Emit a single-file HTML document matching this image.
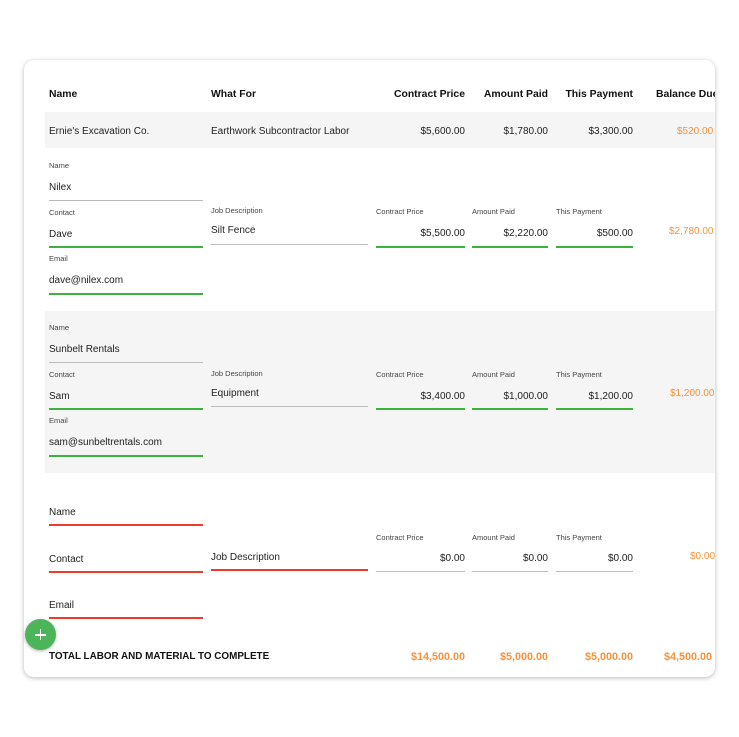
<!DOCTYPE html>
<html><head><meta charset="utf-8"><style>
*{margin:0;padding:0;box-sizing:border-box}
body{width:739px;height:737px;background:#fff;font-family:"Liberation Sans",sans-serif;position:relative;overflow:hidden;color:#222}
.card{position:absolute;left:24px;top:60px;width:691px;height:617px;border-radius:10px;background:#fff;box-shadow:0 1px 5px rgba(0,0,0,.28);overflow:hidden}
.a{position:absolute;white-space:nowrap;font-size:10px;line-height:12px;margin-top:2px}
.h{font-weight:bold;font-size:10.4px;color:#111}
.r{text-align:right}
.lb{font-size:7.5px;color:#444;line-height:10px;margin-top:1px}
.o{color:#f7923a}
.ob{color:#f7923a;font-weight:bold;font-size:10.8px}
.ln{position:absolute;height:1px;background:#bbb}
.g{height:2px;background:#3cb33c}
.rd{height:2px;background:#ee3b2a}
.bg{position:absolute;background:#f5f5f5}
</style></head><body>
<div class="card">
<div class="bg" style="left:21px;top:52px;width:680px;height:36px"></div>
<div class="bg" style="left:21px;top:251px;width:680px;height:162px"></div>
</div>
<div style="position:absolute;left:24px;top:60px;width:691px;height:617px;overflow:hidden;border-radius:10px">
<div style="position:absolute;left:-24px;top:-60px;width:760px;height:737px">
<div class="a h" style="left:49px;top:87px">Name</div>
<div class="a h" style="left:211px;top:87px">What For</div>
<div class="a h r" style="left:345px;width:120px;top:87px">Contract Price</div>
<div class="a h r" style="left:428px;width:120px;top:87px">Amount Paid</div>
<div class="a h r" style="left:513px;width:120px;top:87px">This Payment</div>
<div class="a h" style="left:656px;top:87px">Balance Due</div>
<div class="a" style="left:49px;top:124px">Ernie's Excavation Co.</div>
<div class="a" style="left:211px;top:124px">Earthwork Subcontractor Labor</div>
<div class="a r" style="left:365px;width:100px;top:124px">$5,600.00</div>
<div class="a r" style="left:448px;width:100px;top:124px">$1,780.00</div>
<div class="a r" style="left:533px;width:100px;top:124px">$3,300.00</div>
<div class="a o" style="left:677px;top:124px">$520.00</div>
<div class="a lb" style="left:49px;top:160px">Name</div>
<div class="a" style="left:49px;top:180px">Nilex</div>
<div class="ln" style="left:49px;top:200px;width:154px"></div>
<div class="a lb" style="left:49px;top:207px">Contact</div>
<div class="a" style="left:49px;top:227px">Dave</div>
<div class="ln g" style="left:49px;top:246px;width:154px"></div>
<div class="a lb" style="left:49px;top:253px">Email</div>
<div class="a" style="left:49px;top:273px">dave@nilex.com</div>
<div class="ln g" style="left:49px;top:293px;width:154px"></div>
<div class="a lb" style="left:211px;top:205px">Job Description</div>
<div class="a" style="left:211px;top:223px">Silt Fence</div>
<div class="ln" style="left:211px;top:244px;width:157px"></div>
<div class="a lb" style="left:376px;top:206px">Contract Price</div>
<div class="a lb" style="left:472px;top:206px">Amount Paid</div>
<div class="a lb" style="left:556px;top:206px">This Payment</div>
<div class="a r" style="left:365px;width:100px;top:226px">$5,500.00</div>
<div class="a r" style="left:448px;width:100px;top:226px">$2,220.00</div>
<div class="a r" style="left:533px;width:100px;top:226px">$500.00</div>
<div class="ln g" style="left:376px;top:246px;width:89px"></div>
<div class="ln g" style="left:472px;top:246px;width:76px"></div>
<div class="ln g" style="left:556px;top:246px;width:77px"></div>
<div class="a o" style="left:669px;top:224px">$2,780.00</div>
<div class="a lb" style="left:49px;top:322px">Name</div>
<div class="a" style="left:49px;top:342px">Sunbelt Rentals</div>
<div class="ln" style="left:49px;top:362px;width:154px"></div>
<div class="a lb" style="left:49px;top:369px">Contact</div>
<div class="a" style="left:49px;top:389px">Sam</div>
<div class="ln g" style="left:49px;top:408px;width:154px"></div>
<div class="a lb" style="left:49px;top:415px">Email</div>
<div class="a" style="left:49px;top:435px">sam@sunbeltrentals.com</div>
<div class="ln g" style="left:49px;top:455px;width:154px"></div>
<div class="a lb" style="left:211px;top:368px">Job Description</div>
<div class="a" style="left:211px;top:386px">Equipment</div>
<div class="ln" style="left:211px;top:406px;width:157px"></div>
<div class="a lb" style="left:376px;top:369px">Contract Price</div>
<div class="a lb" style="left:472px;top:369px">Amount Paid</div>
<div class="a lb" style="left:556px;top:369px">This Payment</div>
<div class="a r" style="left:365px;width:100px;top:389px">$3,400.00</div>
<div class="a r" style="left:448px;width:100px;top:389px">$1,000.00</div>
<div class="a r" style="left:533px;width:100px;top:389px">$1,200.00</div>
<div class="ln g" style="left:376px;top:408px;width:89px"></div>
<div class="ln g" style="left:472px;top:408px;width:76px"></div>
<div class="ln g" style="left:556px;top:408px;width:77px"></div>
<div class="a o" style="left:670px;top:386px">$1,200.00</div>
<div class="a" style="left:49px;top:505px">Name</div>
<div class="ln rd" style="left:49px;top:524px;width:154px"></div>
<div class="a" style="left:49px;top:552px">Contact</div>
<div class="ln rd" style="left:49px;top:571px;width:154px"></div>
<div class="a" style="left:49px;top:598px">Email</div>
<div class="ln rd" style="left:49px;top:617px;width:154px"></div>
<div class="a" style="left:211px;top:550px">Job Description</div>
<div class="ln rd" style="left:211px;top:569px;width:157px"></div>
<div class="a lb" style="left:376px;top:532px">Contract Price</div>
<div class="a lb" style="left:472px;top:532px">Amount Paid</div>
<div class="a lb" style="left:556px;top:532px">This Payment</div>
<div class="a r" style="left:365px;width:100px;top:551px">$0.00</div>
<div class="a r" style="left:448px;width:100px;top:551px">$0.00</div>
<div class="a r" style="left:533px;width:100px;top:551px">$0.00</div>
<div class="ln" style="left:376px;top:571px;width:89px"></div>
<div class="ln" style="left:472px;top:571px;width:76px"></div>
<div class="ln" style="left:556px;top:571px;width:77px"></div>
<div class="a o" style="left:690px;top:549px">$0.00</div>
<div class="a h" style="left:49px;top:649px;font-size:9.9px">TOTAL LABOR AND MATERIAL TO COMPLETE</div>
<div class="a ob r" style="left:345px;width:120px;top:649px">$14,500.00</div>
<div class="a ob r" style="left:428px;width:120px;top:649px">$5,000.00</div>
<div class="a ob r" style="left:513px;width:120px;top:649px">$5,000.00</div>
<div class="a ob" style="left:664px;top:649px">$4,500.00</div>
</div></div>
<div style="position:absolute;left:25px;top:619px;width:31px;height:31px;border-radius:50%;background:#4cb55a;box-shadow:0 1px 3px rgba(0,0,0,.3)">
<div style="position:absolute;left:10px;top:15px;width:11px;height:1.6px;background:#fff"></div>
<div style="position:absolute;left:14.7px;top:10px;width:1.6px;height:11px;background:#fff"></div>
</div>
</body></html>
